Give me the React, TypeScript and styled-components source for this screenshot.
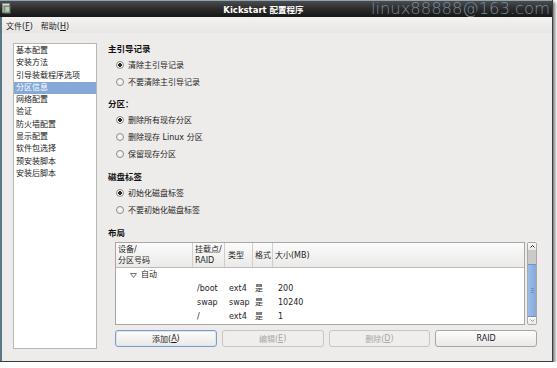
import React from "react";
import styled, { createGlobalStyle } from "styled-components";

const GlobalStyle = createGlobalStyle`
  html, body { margin: 0; padding: 0; background: #fff; }
  body {
    font-family: "DejaVu Sans", "Noto Sans CJK SC", sans-serif;
    font-size: 8px;
    color: #1e1e1e;
  }
`;

const Window = styled.div`
  width: 553px;
  height: 362px;
  box-sizing: border-box;
  display: flex;
  flex-direction: column;
  background: #edeceb;
  border-right: 1px solid #3c3c3c;
  border-bottom: 1px solid #3c3c3c;
  box-shadow: 2px 2px 3px rgba(0, 0, 0, 0.55);
`;

const TitleBar = styled.div`
  position: relative;
  flex: none;
  height: 17px;
  box-sizing: border-box;
  border-top: 1px solid #8aa6b6;
  background: linear-gradient(#4c4c4c, #2b2b2b 50%, #171717);
  display: flex;
  align-items: center;
  justify-content: center;
  padding-right: 25px;
  color: #fff;
  font-weight: bold;
  font-size: 8.5px;
`;

const TitleIcon = styled.svg`
  position: absolute;
  left: 2px;
  top: 2px;
`;

const Watermark = styled.span`
  position: absolute;
  right: 2px;
  top: 0;
  height: 16px;
  line-height: 15px;
  font-family: "DejaVu Sans", sans-serif;
  font-weight: 200;
  font-size: 16.5px;
  color: #7f95a8;
  opacity: 0.9;
  letter-spacing: -0.1px;
  white-space: nowrap;
  overflow: visible;
`;

const Frame = styled.div`
  flex: 1;
  display: flex;
  flex-direction: column;
  border-left: 2px solid #5b7886;
  min-height: 0;
`;

const MenuBar = styled.div`
  flex: none;
  height: 16px;
  display: flex;
  align-items: center;
  gap: 8px;
  padding-left: 4px;
  background: linear-gradient(#f3f2f1, #e7e6e4);
`;

const MenuItem = styled.span`
  u { text-decoration: underline; }
`;

const Body = styled.div`
  flex: 1;
  display: flex;
  gap: 11px;
  padding: 10px 15px 12px 11px;
  min-height: 0;
`;

const Sidebar = styled.ul`
  list-style: none;
  margin: 0;
  width: 84px;
  box-sizing: border-box;
  padding: 1px 0 0;
  background: #fff;
  border: 1px solid #b9b7b3;
`;

const SideItem = styled.li<{ $active?: boolean }>`
  height: 12.3px;
  line-height: 12.3px;
  padding-left: 2px;
  white-space: nowrap;
  background: ${(p) => (p.$active ? "#86a8d8" : "transparent")};
  color: ${(p) => (p.$active ? "#fff" : "#222")};
`;

const Main = styled.div`
  flex: 1;
  display: flex;
  flex-direction: column;
  min-width: 0;
`;

const Section = styled.div<{ $gap: number }>`
  margin-top: ${(p) => p.$gap}px;
`;

const Heading = styled.div`
  height: 12px;
  line-height: 12px;
  font-weight: bold;
  font-size: 8.5px;
  color: #111;
`;

const RadioList = styled.div`
  margin-top: 1px;
`;

const RadioRow = styled.label`
  height: 17px;
  display: flex;
  align-items: center;
  gap: 4px;
  padding-left: 8px;
`;

const RadioDot = styled.span<{ $on?: boolean }>`
  width: 8px;
  height: 8px;
  box-sizing: border-box;
  border-radius: 50%;
  border: 1px solid #8e8c89;
  background: ${(p) =>
    p.$on
      ? "radial-gradient(circle, #2b2b2b 0 1.6px, #fbfbfb 2px, #e8e7e5 100%)"
      : "radial-gradient(circle, #fbfbfb 0, #e8e7e5 100%)"};
`;

const TableWrap = styled.div`
  margin: 3px 0 0 7px;
  height: 83px;
  display: flex;
  gap: 2px;
`;

const TreeFrame = styled.div`
  flex: 1;
  border: 1px solid #a9a7a4;
  background: #fff;
  overflow: hidden;
`;

const cols = "77px 32px 28px 20px 1fr";

const HeaderRow = styled.div`
  display: grid;
  grid-template-columns: ${cols};
  height: 25px;
  box-sizing: border-box;
  border-bottom: 1px solid #bdbcba;
  background: linear-gradient(#fbfbfb, #ebeae9);
`;

const HeadCell = styled.div<{ $last?: boolean; $pad?: number }>`
  display: flex;
  align-items: center;
  padding-left: ${(p) => p.$pad ?? 2}px;
  line-height: 11px;
  border-right: ${(p) => (p.$last ? "none" : "1px solid #cfcecc")};
  white-space: nowrap;
`;

const Row = styled.div`
  display: grid;
  grid-template-columns: ${cols};
  height: 14px;
  line-height: 14px;
`;

const Cell = styled.div<{ $pad?: number }>`
  padding-left: ${(p) => p.$pad ?? 4}px;
  white-space: nowrap;
`;

const Expander = styled.div`
  display: flex;
  align-items: center;
  gap: 4px;
  padding-left: 14px;
`;

const Scrollbar = styled.div`
  width: 10px;
  display: flex;
  flex-direction: column;
  box-sizing: border-box;
  border: 1px solid #aaa9a6;
  border-radius: 2px;
  background: #f4f4f3;
  overflow: hidden;
`;

const Arrow = styled.div`
  height: 7px;
  display: flex;
  align-items: center;
  justify-content: center;
  background: linear-gradient(#fcfcfc, #e9e9e8);
`;

const Trough = styled.div`
  height: 14px;
  background: #cbcac8;
`;

const Thumb = styled.div`
  flex: 1;
  display: flex;
  flex-direction: column;
  align-items: center;
  justify-content: center;
  gap: 1px;
  background: linear-gradient(90deg, #9bbde9, #84a9dc);
  border-top: 1px solid #6f94c8;
  border-bottom: 1px solid #6f94c8;
  span {
    width: 3px;
    height: 1px;
    background: #6c8fbf;
  }
`;

const ButtonRow = styled.div`
  display: flex;
  gap: 5px;
  margin: 5px 0 0 7px;
`;

const Button = styled.div<{ $focus?: boolean; $disabled?: boolean }>`
  flex: 1;
  height: 17px;
  box-sizing: border-box;
  display: flex;
  align-items: center;
  justify-content: center;
  border-radius: 3px;
  border: 1px solid ${(p) => (p.$focus ? "#7e9cc8" : p.$disabled ? "#c7c6c3" : "#a8a6a3")};
  background: ${(p) => (p.$disabled ? "#efeeed" : "linear-gradient(#fdfdfd, #e9e8e6)")};
  color: ${(p) => (p.$disabled ? "#a9a7a4" : "#1e1e1e")};
  box-shadow: ${(p) => (p.$focus ? "inset 0 0 0 1px #dbe6f5" : "none")};
  u { text-decoration: underline; }
`;

const sideItems = [
  "基本配置",
  "安装方法",
  "引导装载程序选项",
  "分区信息",
  "网络配置",
  "验证",
  "防火墙配置",
  "显示配置",
  "软件包选择",
  "预安装脚本",
  "安装后脚本",
];

const partitions = [
  { mount: "/boot", type: "ext4", size: "200" },
  { mount: "swap", type: "swap", size: "10240" },
  { mount: "/", type: "ext4", size: "1" },
];

const Radio = ({ on, children }: { on?: boolean; children: React.ReactNode }) => (
  <RadioRow>
    <RadioDot $on={on} />
    <span>{children}</span>
  </RadioRow>
);

export default function App() {
  return (
    <>
      <GlobalStyle />
      <Window>
        <TitleBar>
          <TitleIcon width="10" height="11" viewBox="0 0 10 11">
            <rect x="0.5" y="0.5" width="7" height="9" fill="#d8dcd8" stroke="#8a8f8a" />
            <rect x="2" y="3" width="6" height="7" fill="#9bb79b" stroke="#5c7a5c" />
            <path d="M4 5h3M4 7h3" stroke="#eef" strokeWidth="0.8" />
          </TitleIcon>
          Kickstart 配置程序
          <Watermark>linux88888@163.com</Watermark>
        </TitleBar>
        <Frame>
          <MenuBar>
            <MenuItem>文件(<u>F</u>)</MenuItem>
            <MenuItem>帮助(<u>H</u>)</MenuItem>
          </MenuBar>
          <Body>
            <Sidebar>
              {sideItems.map((s, i) => (
                <SideItem key={s} $active={i === 3}>
                  {s}
                </SideItem>
              ))}
            </Sidebar>
            <Main>
              <Section $gap={0}>
                <Heading>主引导记录</Heading>
                <RadioList>
                  <Radio on>清除主引导记录</Radio>
                  <Radio>不要清除主引导记录</Radio>
                </RadioList>
              </Section>
              <Section $gap={8}>
                <Heading>分区：</Heading>
                <RadioList>
                  <Radio on>删除所有现存分区</Radio>
                  <Radio>删除现存 Linux 分区</Radio>
                  <Radio>保留现存分区</Radio>
                </RadioList>
              </Section>
              <Section $gap={9}>
                <Heading>磁盘标签</Heading>
                <RadioList>
                  <Radio on>初始化磁盘标签</Radio>
                  <Radio>不要初始化磁盘标签</Radio>
                </RadioList>
              </Section>
              <Section $gap={9}>
                <Heading>布局</Heading>
              </Section>
              <TableWrap>
                <TreeFrame>
                  <HeaderRow>
                    <HeadCell>
                      设备/
                      <br />
                      分区号码
                    </HeadCell>
                    <HeadCell>
                      挂载点/
                      <br />
                      RAID
                    </HeadCell>
                    <HeadCell $pad={3}>类型</HeadCell>
                    <HeadCell>格式</HeadCell>
                    <HeadCell $last>大小(MB)</HeadCell>
                  </HeaderRow>
                  <Row>
                    <Expander>
                      <svg width="7" height="5" viewBox="0 0 7 5">
                        <path d="M0.5 0.5h6L3.5 4.5z" fill="#fff" stroke="#6a6a6a" strokeWidth="0.9" />
                      </svg>
                      自动
                    </Expander>
                  </Row>
                  {partitions.map((p) => (
                    <Row key={p.mount}>
                      <Cell />
                      <Cell>{p.mount}</Cell>
                      <Cell>{p.type}</Cell>
                      <Cell $pad={2}>是</Cell>
                      <Cell $pad={5}>{p.size}</Cell>
                    </Row>
                  ))}
                </TreeFrame>
                <Scrollbar>
                  <Arrow>
                    <svg width="5" height="3" viewBox="0 0 5 3">
                      <path d="M0.5 2.5L2.5 0.5L4.5 2.5" fill="none" stroke="#222" strokeWidth="1" />
                    </svg>
                  </Arrow>
                  <Trough />
                  <Thumb>
                    <span />
                    <span />
                    <span />
                  </Thumb>
                  <Arrow>
                    <svg width="5" height="3" viewBox="0 0 5 3">
                      <path d="M0.5 0.5L2.5 2.5L4.5 0.5" fill="none" stroke="#9a9a9a" strokeWidth="1" />
                    </svg>
                  </Arrow>
                </Scrollbar>
              </TableWrap>
              <ButtonRow>
                <Button $focus>添加(<u>A</u>)</Button>
                <Button $disabled>编辑(<u>E</u>)</Button>
                <Button $disabled>删除(<u>D</u>)</Button>
                <Button>RAID</Button>
              </ButtonRow>
            </Main>
          </Body>
        </Frame>
      </Window>
    </>
  );
}
